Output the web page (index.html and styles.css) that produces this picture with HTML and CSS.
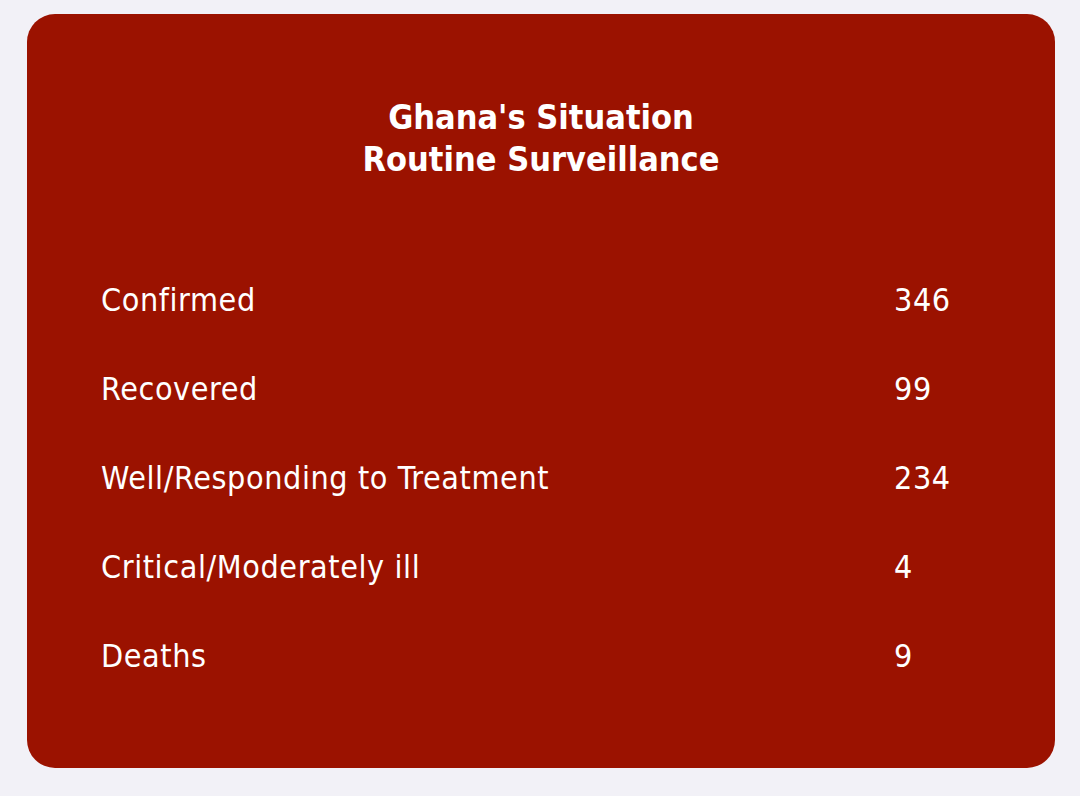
FILE: index.html
```html
<!DOCTYPE html>
<html>
<head>
<meta charset="utf-8">
<link rel="stylesheet" href="styles.css">
</head>
<body>
<div class="card">
  <h1 class="title">Ghana's Situation<br>Routine Surveillance</h1>
  <div class="rows">
    <div class="row"><span class="label">Confirmed</span><span class="value">346</span></div>
    <div class="row"><span class="label">Recovered</span><span class="value">99</span></div>
    <div class="row"><span class="label">Well/Responding to Treatment</span><span class="value">234</span></div>
    <div class="row"><span class="label">Critical/Moderately ill</span><span class="value">4</span></div>
    <div class="row"><span class="label">Deaths</span><span class="value">9</span></div>
  </div>
</div>
</body>
</html>
```
FILE: styles.css
```css
html, body {
  margin: 0;
  padding: 0;
  background: #f2f1f7;
}
body {
  padding: 14px 25px 28px 27px;
  font-family: "DejaVu Sans Condensed", "DejaVu Sans", sans-serif;
  color: #ffffff;
}
.card {
  background: #9b1200;
  border-radius: 28px;
  height: 754px;
  box-sizing: border-box;
  padding: 82px 0 0 74px;
  display: flex;
  flex-direction: column;
}
.title {
  margin: 0;
  text-align: center;
  font-size: 34px;
  line-height: 42px;
  font-weight: bold;
  padding-right: 74px;
}
.rows {
  margin-top: 100px;
  display: flex;
  flex-direction: column;
}
.row {
  display: flex;
  height: 89px;
  font-size: 32px;
  line-height: 40px;
  letter-spacing: 0.6px;
}
.label {
  width: 793px;
}
```
